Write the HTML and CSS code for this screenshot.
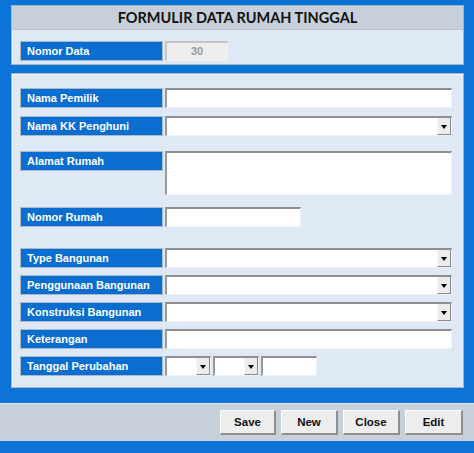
FILE: index.html
```html
<!DOCTYPE html>
<html>
<head>
<meta charset="utf-8">
<link rel="stylesheet" href="styles.css">
</head>
<body>
<div class="window">
  <div class="content">
    <section class="panel top">
      <div class="title">FORMULIR DATA RUMAH TINGGAL</div>
      <div class="toprow">
        <div class="label">Nomor Data</div>
        <div class="field num">30</div>
      </div>
    </section>
    <section class="panel form">
      <div class="row r1"><div class="label">Nama Pemilik</div><div class="field wide"></div></div>
      <div class="row r2"><div class="label">Nama KK Penghuni</div><div class="field wide select"><span class="dd"></span></div></div>
      <div class="row r3"><div class="label">Alamat Rumah</div><div class="field wide area"></div></div>
      <div class="row r4"><div class="label">Nomor Rumah</div><div class="field mid"></div></div>
      <div class="row r5"><div class="label">Type Bangunan</div><div class="field wide select"><span class="dd"></span></div></div>
      <div class="row r6"><div class="label">Penggunaan Bangunan</div><div class="field wide select"><span class="dd"></span></div></div>
      <div class="row r6"><div class="label">Konstruksi Bangunan</div><div class="field wide select"><span class="dd"></span></div></div>
      <div class="row r6"><div class="label">Keterangan</div><div class="field wide"></div></div>
      <div class="row r6"><div class="label">Tanggal Perubahan</div>
        <div class="dates">
          <div class="field small select"><span class="dd"></span></div>
          <div class="field small select"><span class="dd"></span></div>
          <div class="field year"></div>
        </div>
      </div>
    </section>
  </div>
  <div class="bar">
    <button class="btn b-save">Save</button>
    <button class="btn b-new">New</button>
    <button class="btn b-close">Close</button>
    <button class="btn b-edit">Edit</button>
  </div>
</div>
</body>
</html>
```
FILE: styles.css
```css
html, body {
  margin: 0;
  padding: 0;
  background: #0b74d6;
  width: 474px;
  height: 453px;
  overflow: hidden;
  font-family: "Liberation Sans", Arial, sans-serif;
}
.window {
  display: flex;
  flex-direction: column;
  height: 453px;
}
.content {
  padding: 5px 10px 0 11px;
  display: flex;
  flex-direction: column;
  gap: 8px;
}
.panel {
  background: #dee9f5;
  border: 1px solid #a5b3c1;
  box-shadow: inset 1px 1px 0 #f4f8fc;
  box-sizing: border-box;
}
.panel.top {
  height: 60px;
}
.title {
  height: 23px;
  background: #c7d0da;
  border-bottom: 1px solid #b7c1cc;
  font-family: "Lato", "Open Sans", sans-serif;
  font-weight: 700;
  font-size: 14.5px;
  color: #111111;
  text-align: center;
  line-height: 24px;
}
.toprow {
  display: flex;
  gap: 2px;
  margin: 11px 0 0 8px;
}
.label {
  box-sizing: border-box;
  width: 143px;
  height: 20px;
  background: #0a6ed0;
  border: 1px solid #a9b9ca;
  color: #ffffff;
  font-weight: 700;
  font-size: 11px;
  line-height: 18px;
  padding-left: 6px;
  flex: none;
}
.field {
  box-sizing: border-box;
  height: 20px;
  background: #ffffff;
  border-top: 2px solid #8e8e8e;
  border-left: 2px solid #9a9a9a;
  border-right: 1px solid #eef3f8;
  border-bottom: 1px solid #eef3f8;
  position: relative;
}
.field.num {
  width: 63px;
  background: #eeeeee;
  border-top: 2px solid #c4c4c4;
  border-left: 2px solid #c8c8c8;
  color: #999999;
  font-size: 11px;
  font-weight: 700;
  text-align: center;
  line-height: 17px;
}
.panel.form {
  height: 315px;
  padding: 14px 0 0 8px;
}
.row {
  display: flex;
  gap: 2px;
  align-items: flex-start;
}
.r2 { margin-top: 8px; }
.r3 { margin-top: 15px; }
.r4 { margin-top: 12px; }
.r5 { margin-top: 21px; }
.r6 { margin-top: 7px; }
.field.wide { width: 287px; }
.field.area { height: 44px; }
.field.mid { width: 136px; }
.dd {
  position: absolute;
  right: 0;
  top: 0;
  width: 14px;
  height: 17px;
  box-sizing: border-box;
  background: #ececec;
  border-left: 1px solid #f8f8f8;
  border-right: 1px solid #8a8a8a;
  border-bottom: 1px solid #8a8a8a;
}
.dd::after {
  content: "";
  position: absolute;
  left: 3px;
  top: 7px;
  border-left: 3.5px solid transparent;
  border-right: 3.5px solid transparent;
  border-top: 4px solid #000000;
}
.dates {
  display: flex;
  gap: 2px;
}
.field.small { width: 46px; }
.field.year { width: 56px; }
.bar {
  margin-top: 15px;
  height: 38px;
  background: #c8d0d9;
  border-top: 1px solid #dfe5eb;
  box-sizing: border-box;
  display: flex;
  justify-content: flex-end;
  align-items: flex-start;
  gap: 5px;
  padding: 6px 11px 0 0;
}
.btn {
  box-sizing: border-box;
  height: 25px;
  margin: 0;
  padding: 0;
  background: #ededed;
  border-top: 1px solid #ffffff;
  border-left: 1px solid #ffffff;
  border-right: 2px solid #8f8f8f;
  border-bottom: 2px solid #8f8f8f;
  font-family: "Liberation Sans", Arial, sans-serif;
  font-weight: 700;
  font-size: 11.5px;
  color: #111111;
}
.b-save { width: 56px; }
.b-new { width: 57px; }
.b-close { width: 57px; }
.b-edit { width: 58px; }
```
